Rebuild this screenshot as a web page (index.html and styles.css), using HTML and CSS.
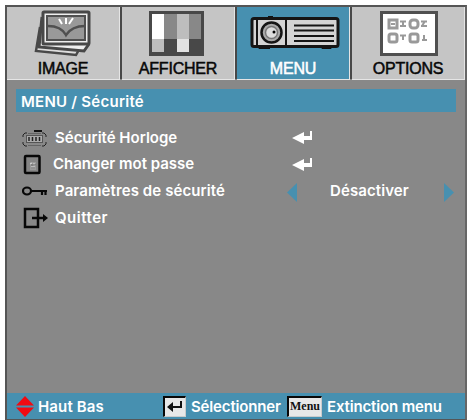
FILE: index.html
```html
<!DOCTYPE html>
<html lang="fr">
<head>
<meta charset="utf-8">
<title>MENU / Sécurité</title>
<link rel="stylesheet" href="styles.css">
</head>
<body>
<main class="osd">
  <nav class="tabs">
    <div class="tab">
      <svg class="tab-icon photos" width="58" height="47" viewBox="0 0 58 47">
        <path d="M6 17L2 41l40 4 4-7" fill="#ddd" stroke="#484848" stroke-width="2.5"/>
        <path d="M8 7L5 37l45 4 5-7" fill="#eee" stroke="#484848" stroke-width="3"/>
        <rect x="9" y="2" width="46" height="32" rx="1" fill="#eee" stroke="#484848" stroke-width="3"/>
        <rect x="13" y="6" width="38" height="24" fill="#999" stroke="#505050" stroke-width="2"/>
        <path d="M14 16q13 0 18 9 6-9 19-9" fill="none" stroke="#505050" stroke-width="2.5"/>
        <path d="M25 9l3 5M32 8v6M39 8l-4 6" stroke="#fff" stroke-width="2"/>
      </svg>
      <span class="tab-label label-image">IMAGE</span>
    </div>
    <div class="tab">
      <svg class="tab-icon" width="58" height="47" viewBox="0 0 58 47">
        <rect x="1" y="1" width="55" height="45" fill="#484848"/>
        <path fill="#fff" d="M4 4h12v25H4z"/><path fill="#888" d="M16 4h13v25H16zM41 4h12v25H41z"/>
        <path fill="#bdbdbd" d="M29 4h12v25H29zM4 29h12v13H4z"/><path fill="#e2e2e2" d="M29 29h12v13H29z"/>
      </svg>
      <span class="tab-label label-display">AFFICHER</span>
    </div>
    <div class="tab active">
      <svg class="projector" width="90" height="36" viewBox="0 0 90 36">
        <path d="M7 31h13v3H9zM70 31h13l-2 3h-9zM18 1h5v3h-5z" fill="#111"/>
        <rect x="2" y="3.500" width="86" height="28" rx="2" fill="#d4d4d4" stroke="#151515" stroke-width="3"/>
        <path d="M7 4v27M36 4v27" stroke="#151515" stroke-width="2"/>
        <circle cx="21.500" cy="17.500" r="10" fill="#aaa" stroke="#151515" stroke-width="2.500"/>
        <circle cx="21.500" cy="17.500" r="6" fill="#ddd" stroke="#777" stroke-width="1.500"/>
        <circle cx="24" cy="17" r="1.500"/>
        <path d="M44 10.500h40M44 15.500h40M44 21h40M44 26h40" stroke="#151515" stroke-width="2.200"/>
      </svg>
      <span class="tab-label label-menu">MENU</span>
    </div>
    <div class="tab">
      <svg class="tab-icon options" width="60" height="47" viewBox="0 0 60 47">
        <rect x="2.500" y="2.500" width="55" height="42" fill="#fff" stroke="#505050" stroke-width="3"/>
        <g fill="none" stroke="#999" stroke-width="3">
          <rect x="10" y="10" width="8" height="8"/><rect x="31" y="10" width="8" height="8" rx="3"/>
          <rect x="10" y="24" width="8" height="8" rx="2"/><rect x="31" y="24" width="8" height="8" rx="2"/>
          <path d="M12 14h4" stroke-width="2"/>
          <path d="M21 11.500h6M21 16h6M24 11v5M42 11.500h6M42 16h6M46 11l-3 5M21 25.500h6M24 25v5M45 25v6M43 30h5" stroke-width="2"/>
        </g>
      </svg>
      <span class="tab-label label-options">OPTIONS</span>
    </div>
  </nav>
  <h1 class="heading"><span class="heading-text">MENU / Sécurité</span></h1>
  <section class="rows">
    <div class="row">
      <svg class="row-icon" width="26" height="26" viewBox="0 0 26 26">
        <path d="M12 6h8" stroke="#111" stroke-width="2"/>
        <path d="M5 8H3L1 10v2M1 17v2l2 2h2M20 8h2l2 2v2M24 17v2l-2 2h-2" fill="none" stroke="#222"/>
        <path d="M6 8.500h13M6 20.500h13" stroke="#555" stroke-width=".7"/>
        <rect x="4.500" y="10.500" width="16" height="7" fill="#aaa" stroke="#555"/>
        <path d="M7 12v4M10.500 12v4M14 12v4M17.500 12v4" fill="none" stroke="#222" stroke-width="1.500"/>
      </svg>
      <span class="label l-clock">Sécurité Horloge</span>
      <svg class="enter" width="21" height="13" viewBox="0 0 21 13"><path d="M0 7l12-6v4h6V0h2v9h-8v4z" fill="#fff"/></svg>
    </div>
    <div class="row row-pass">
      <svg class="row-icon" width="26" height="26" viewBox="0 0 26 26">
        <rect x="3" y="5" width="14.500" height="17" rx="1" fill="#858585" stroke="#080808" stroke-width="2.500"/>
        <rect x="8" y="11" width="6" height="8" fill="#999"/><path d="M8 13l2-1M12 12v6M10 15v3M13 14v1" stroke="#ddd"/><path d="M9 14h5M9 17h4" stroke="#666"/>
      </svg>
      <span class="label l-pass">Changer mot passe</span>
      <svg class="enter" width="21" height="13" viewBox="0 0 21 13"><path d="M0 7l12-6v4h6V0h2v9h-8v4z" fill="#fff"/></svg>
    </div>
    <div class="row">
      <svg class="row-icon" width="26" height="26" viewBox="0 0 26 26">
        <ellipse cx="5" cy="13" rx="4" ry="3.500" fill="none" stroke="#080808" stroke-width="2.200"/>
        <path d="M8 13h17M20 13v4M23.500 13v4" fill="none" stroke="#080808" stroke-width="2.200"/>
      </svg>
      <span class="label l-params">Paramètres de sécurité</span>
      <svg class="arrow-left" width="10" height="19" viewBox="0 0 10 19"><path d="M10 0v19L0 9.500z" fill="#4790b0"/></svg>
      <span class="value">Désactiver</span>
      <svg class="arrow-right" width="10" height="19" viewBox="0 0 10 19"><path d="M0 0v19l10-9.500z" fill="#4790b0"/></svg>
    </div>
    <div class="row">
      <svg class="row-icon" width="26" height="26" viewBox="0 0 26 26">
        <path d="M3 4h13v18H3z" fill="none" stroke="#080808" stroke-width="2.500"/>
        <path d="M10 13h12" stroke="#080808" stroke-width="2.500"/><path d="M21 9l5 4-5 4z" fill="#080808"/>
      </svg>
      <span class="label l-quit">Quitter</span>
    </div>
  </section>
  <footer class="footer">
    <svg class="updown" width="18" height="21" viewBox="0 0 18 21"><path d="M9 0l9 9.500H0zM0 11.500h18L9 21z" fill="#f00b12"/></svg>
    <span class="hint h-nav">Haut Bas</span>
    <span class="key key-enter"><svg width="16" height="11" viewBox="0 0 16 11"><path d="M0 6l6-5v4h7V0h2v7H6v4z" fill="#111"/></svg></span>
    <span class="hint h-select">Sélectionner</span>
    <span class="key key-menu"><span class="key-text">Menu</span></span>
    <span class="hint h-exit">Extinction menu</span>
  </footer>
</main>
</body>
</html>
```
FILE: styles.css
```css
* { box-sizing: border-box; }
body { margin: 0; background: #fff; font-family: Inter, "Liberation Sans", sans-serif; }
.osd {
  width: 462px;
  height: 415px;
  margin: 5px 0 0 5px;
  border: 2px solid #555;
  border-bottom-width: 1px;
  border-right-color: #666;
  background: #888;
  display: flex;
  flex-direction: column;
  color: #fff;
}
.tabs { display: grid; grid-template-columns: repeat(4, 113px); column-gap: 2px; background: #484848; height: 72px; }
.tab {
  display: flex;
  flex-direction: column;
  align-items: center;
  padding-top: 3px;
  background: #c5c5c5;
  border-right: 1px solid #e5e5e5;
  border-bottom: 1px solid #e5e5e5;
  color: #080808;
}
.tab.active { background: #4790b0; color: #fff; }
.tab-icon { display: block; flex: none; margin-left: -2px; }
.photos { margin-left: 0; }
.options { margin-left: 2px; }
.projector { display: block; margin: 5px 0 6px 4px; flex: none; }
.tab-label { margin-top: 2px; font: 500 16px/20px "Liberation Sans", sans-serif; letter-spacing: -.2px; white-space: nowrap; -webkit-text-stroke: .5px currentColor; }
.heading { margin: 10px 9px 0; height: 23px; flex: none; background: #4790b0; font-size: 15px; line-height: 25px; font-weight: 600; padding-left: 5px; }
.heading-text { letter-spacing: .25px; }
.rows { padding: 12px 0 0 15px; }
.row { height: 27px; display: flex; align-items: center; }
.row-pass { height: 26px; }
.row-icon { flex: none; margin-right: 7px; }
.label { width: 237px; font-size: 15px; font-weight: 600; line-height: 20px; white-space: nowrap; letter-spacing: 0; }
.l-pass { margin-left: -2px; width: 239px; }
.l-params { width: 232px; letter-spacing: .1px; }
.l-quit { letter-spacing: .5px; }
.value { flex: none; width: 147px; padding-left: 33px; font-size: 15px; font-weight: 600; letter-spacing: .1px; }
.arrow-left, .arrow-right { flex: none; margin-top: 4px; }
.footer { margin-top: auto; height: 26px; background: #4790b0; display: flex; align-items: center; padding-left: 9px; }
.updown { flex: none; margin-right: 4px; }
.hint { font-size: 15px; font-weight: 600; white-space: nowrap; letter-spacing: -.15px; flex: none; }
.h-nav { width: 125px; letter-spacing: .15px; }
.key { flex: none; height: 21px; border-top: 2px solid #080808; border-left: 2px solid #080808; border-right: 1px solid #ccc; border-bottom: 1px solid #ccc; background: #e8e8e8; display: flex; align-items: center; justify-content: center; }
.key-enter { width: 23px; margin-right: 5px; }
.h-select { width: 96px; }
.key-menu { width: 35px; margin-right: 5px; color: #111; }
.key-text { font: bold 12px/17px "Liberation Serif", serif; }
```
